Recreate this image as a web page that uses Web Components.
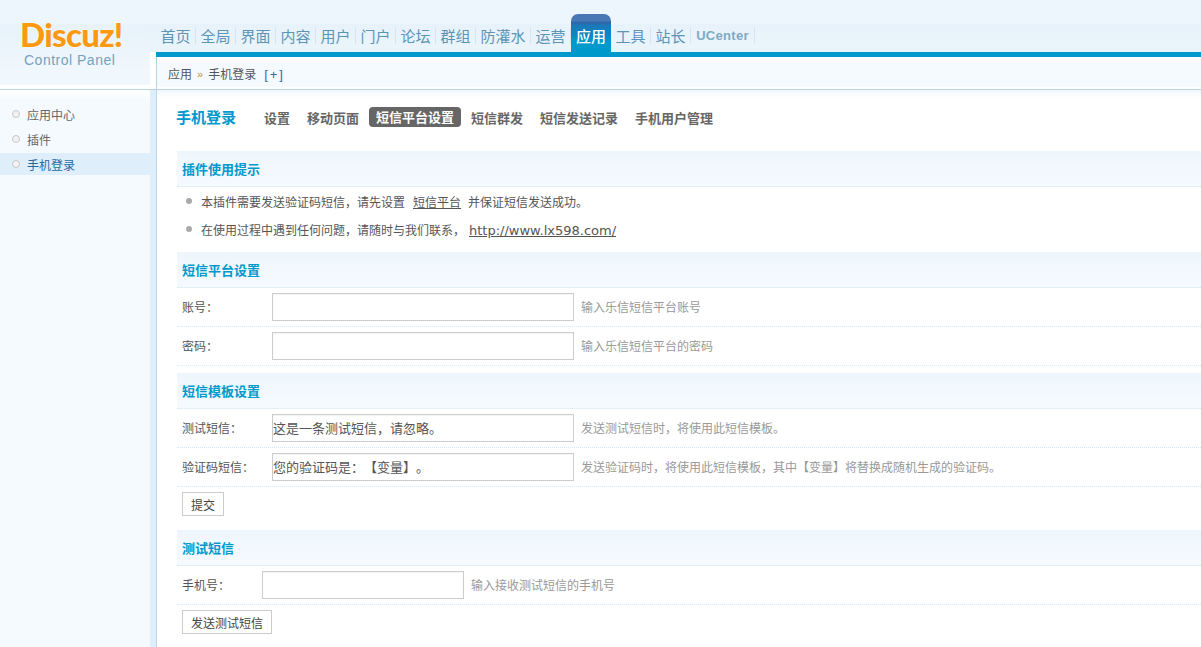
<!DOCTYPE html>
<html lang="zh-CN"><head><meta charset="utf-8"><title>Discuz! Control Panel</title>
<style>
html,body{margin:0;height:647px;overflow:hidden;background:#fff;font:12px/1.5 "Liberation Sans","Noto Sans CJK SC",sans-serif;color:#555;text-spacing-trim:space-all}
</style></head><body>
<cp-app></cp-app>
<template id="t-app"><style>
:host{display:block;width:1201px;height:647px;overflow:hidden}
.body{display:flex;height:557px}
</style>
<cp-header></cp-header>
<div class="body"><cp-side></cp-side><cp-main></cp-main></div>
</template>

<template id="t-header"><style>
:host{display:grid;grid-template-columns:156px 1fr;height:90px;box-sizing:border-box;border-bottom:1px solid #b9d4e4;
 background:linear-gradient(#edf6fd 0,#edf6fd 24px,#e7f2fa 24px,#eaf4fb 52px,#fff 52px)}
.left{width:150px;padding-top:24px;background:linear-gradient(#edf6fd 0,#edf6fd 24px,#e7f2fa 24px,#f0f7fd 70px,#f0f7fd 85px,#fff 85px);height:89px;box-sizing:border-box}
.logo{box-sizing:border-box;width:150px;padding:0 0 0 20px;margin-top:-3px;display:flex;flex-direction:column}
.d{font:900 33px/27px Lato,"Open Sans",sans-serif;letter-spacing:-.7px;color:#fb9a12;text-shadow:0 0 2px #fff}
.c{font:14px/16px "Liberation Sans",sans-serif;color:#74a2c0;padding-left:4px;letter-spacing:.5px;margin-top:4px}
.right{display:flex;flex-direction:column;min-width:0}
nav{height:52px;display:flex;align-items:flex-end;box-sizing:border-box}
.bar{height:5px;background:#0099cc}
.cw{flex:1;border-left:1px solid #b9d4e4;padding:5px 0 2px;background:#fff}
.crumb{height:25px;background:#f5faff;display:flex;align-items:center;padding-left:11px;gap:5px;font-size:12px;color:#555}
.sep{color:#c98d3c;font-size:11px}
.add{color:#2b6d9e;margin-left:3px;letter-spacing:2px;font-size:13px}
</style>
<div class="left"><div class="logo"><span class="d">Discuz!</span><span class="c">Control Panel</span></div></div>
<div class="right"><nav>
<cp-tab>首页</cp-tab><cp-tab>全局</cp-tab><cp-tab>界面</cp-tab><cp-tab>内容</cp-tab><cp-tab>用户</cp-tab><cp-tab>门户</cp-tab><cp-tab>论坛</cp-tab><cp-tab>群组</cp-tab><cp-tab wide>防灌水</cp-tab><cp-tab>运营</cp-tab><cp-tab active>应用</cp-tab><cp-tab>工具</cp-tab><cp-tab>站长</cp-tab><cp-tab uc>UCenter</cp-tab>
</nav><div class="bar"></div>
<div class="cw"><div class="crumb"><span>应用</span><span class="sep">»</span><span>手机登录</span><span class="add">[+]</span></div></div></div>
</template>

<template id="t-tab"><style>
:host{display:block;width:40px;height:28px;box-sizing:border-box;text-align:center;font:15px/24px "Noto Sans CJK SC",sans-serif;color:#5b94b6;position:relative;padding-right:1px}
:host([wide]){width:55px}
:host([uc]){width:64px;font:bold 13px/24px "Liberation Sans",sans-serif;color:#7eaac6;letter-spacing:.3px}
:host(:not([active]))::after{content:"";position:absolute;right:0;top:3px;height:17px;width:1px;background:#d5e5ef}
:host([active]){height:38px;line-height:44px;color:#fff;font-weight:500;border-radius:7px 7px 0 0;padding:0;
 background:linear-gradient(#4a78b5 0,#4a78b5 7px,#2c69ad 8px,#2c69ad 10px,#1b78b9 11px,#0c88c3 22px,#0099cc 27px)}
</style><slot></slot></template>

<template id="t-side"><style>
:host{display:block;width:150px;margin-right:6px;flex:none;background:linear-gradient(#fff 0,#f5faff 10px);padding-top:13px;box-sizing:content-box;height:544px;position:relative;box-shadow:6px 0 0 #deeefb,7px 0 0 #b9d5e6}
a{display:flex;align-items:center;height:25px;padding-left:12px;gap:7px;color:#666;font-size:12px}
a:nth-of-type(3){height:22px;background:#deeefb;color:#1f6aa0;padding-top:4px;box-sizing:border-box}
i{width:6px;height:6px;border:1px solid #c8c8c8;border-radius:50%;background:#f2f2f2;margin-top:-4px}
</style><a><i></i>应用中心</a><a><i></i>插件</a><a><i></i>手机登录</a></template>

<template id="t-main"><style>
:host{display:block;flex:1;min-width:0;padding:0 0 0 20px;margin-left:1px;overflow:hidden;background:linear-gradient(#eff6fb 0,#fff 8px)}
.top{height:61px;display:flex;align-items:flex-start;padding-top:16px;box-sizing:border-box}
h1{margin:0 0 0 -1px;font:bold 15px/22px "Noto Sans CJK SC",sans-serif;color:#0099cc;width:88px}
.m{display:flex;font:bold 13px/22px "Noto Sans CJK SC",sans-serif;color:#666;gap:17px;margin-top:1px}
.m .on{background:#666;color:#fff;border-radius:4px;padding:0 7px;height:20px;line-height:20px;margin:0 -7px}
ul{list-style:none;margin:0;padding:0 0 0 9px;height:65px}
li{height:28px;line-height:28px;display:flex;align-items:center;gap:9px;color:#555}
li span{padding-top:4px}
li::before{content:"";width:6px;height:6px;border-radius:50%;background:#aaa;margin-top:-1px}
li a{text-decoration:underline;color:#555;margin:0 7px 0 8px}
li a.u{font:13px "DejaVu Sans",sans-serif;margin:0 0 0 4px}
.gap{height:7px}
</style>
<div class="top"><h1>手机登录</h1><div class="m"><span>设置</span><span>移动页面</span><span class="on">短信平台设置</span><span>短信群发</span><span>短信发送记录</span><span>手机用户管理</span></div></div>
<cp-title>插件使用提示</cp-title>
<ul><li><span>本插件需要发送验证码短信，请先设置<a>短信平台</a>并保证短信发送成功。</span></li><li><span>在使用过程中遇到任何问题，请随时与我们联系，<a class="u">http://www.lx598.com/</a></span></li></ul>
<cp-title>短信平台设置</cp-title>
<cp-row label="账号：" tip="输入乐信短信平台账号"></cp-row>
<cp-row label="密码：" tip="输入乐信短信平台的密码"></cp-row>
<div class="gap"></div>
<cp-title>短信模板设置</cp-title>
<cp-row label="测试短信：" tip="发送测试短信时，将使用此短信模板。">这是一条测试短信<span class="p">，</span>请忽略。</cp-row>
<cp-row label="验证码短信：" tip="发送验证码时，将使用此短信模板，其中【变量】将替换成随机生成的验证码。">您的验证码是<span class="p">：</span>【变量】。</cp-row>
<cp-btn after="14">提交</cp-btn>
<cp-title>测试短信</cp-title>
<cp-row short label="手机号：" tip="输入接收测试短信的手机号"></cp-row>
<cp-btn>发送测试短信</cp-btn>
</template>

<template id="t-title"><style>
:host{display:block;height:36px;box-sizing:border-box;padding-left:5px;background:linear-gradient(#eef6fd,#f5faff);border-bottom:1px dotted #d3e9f4;font:bold 13px/35px "Noto Sans CJK SC",sans-serif;color:#0099cc}
</style><slot></slot></template>

<template id="t-row"><style>
:host{display:flex;align-items:center;height:39px;box-sizing:border-box;border-bottom:1px dotted #d3e9f4;padding:0 0 0 5px;color:#555}
.l{width:90px;flex:none;padding-top:2px}
:host([short]) .l{width:80px}
.i{width:302px;height:28px;box-sizing:border-box;border:1px solid #ccc;flex:none;font:13px/26px "Noto Sans CJK SC",sans-serif;color:#555;white-space:nowrap;overflow:hidden;background:#fff;box-shadow:inset 0 1px 1px #f4f4f4}
::slotted(.p){font-family:"Noto Sans CJK TC",sans-serif}
:host([short]) .i{width:202px}
.t{margin-left:7px;color:#999;white-space:nowrap;padding-top:2px}
</style><span class="l"></span><div class="i"><slot></slot></div><span class="t"></span></template>

<template id="t-btn"><style>
:host{display:block;padding:5px 0 0 5px;height:24px}
button{display:block;height:24px;padding:0 8px;border:1px solid #ccc;background:#fff;font:12px "Noto Sans CJK SC",sans-serif;color:#444}
</style><button><slot></slot></button></template>

<script>
function def(name,tpl,init){customElements.define(name,class extends HTMLElement{
 constructor(){super();this.attachShadow({mode:"open"}).appendChild(document.getElementById(tpl).content.cloneNode(true));}
 connectedCallback(){if(init)init(this)}
});}
def("cp-tab","t-tab");def("cp-header","t-header");def("cp-side","t-side");def("cp-title","t-title");
def("cp-row","t-row",e=>{const s=e.shadowRoot;s.querySelector(".l").textContent=e.getAttribute("label");s.querySelector(".t").textContent=e.getAttribute("tip");});
def("cp-btn","t-btn",e=>{const a=e.getAttribute("after");if(a)e.style.marginBottom=a+"px";});
def("cp-main","t-main");def("cp-app","t-app");
</script>
</body></html>
